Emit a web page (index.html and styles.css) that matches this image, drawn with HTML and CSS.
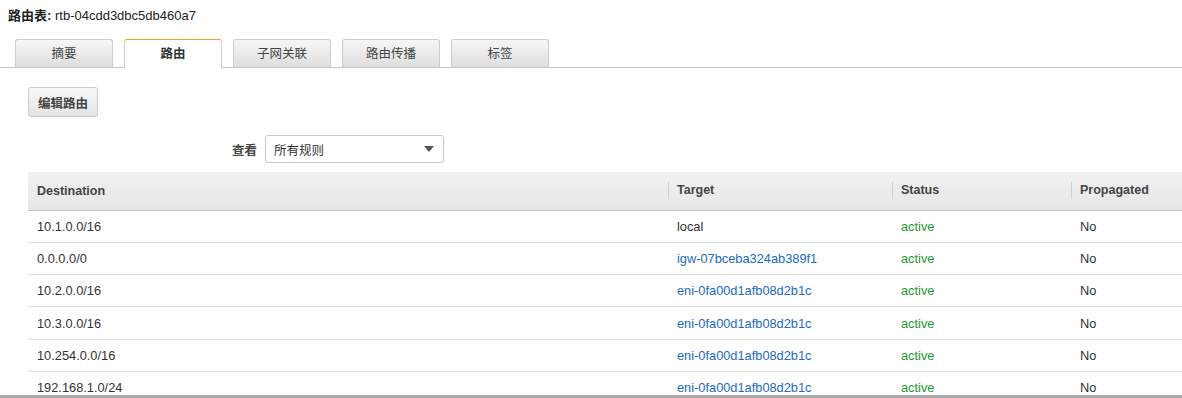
FILE: index.html
```html
<!DOCTYPE html>
<html lang="zh">
<head>
    <meta charset="UTF-8">
    <title>路由表</title>
    <link rel="stylesheet" href="styles.css">
</head>
<body>
    <div class="title"><b>路由表:</b> rtb-04cdd3dbc5db460a7</div>

    <div class="tabs">
        <div class="tab">摘要</div>
        <div class="tab active">路由</div>
        <div class="tab">子网关联</div>
        <div class="tab">路由传播</div>
        <div class="tab">标签</div>
    </div>

    <div class="panel">
        <button class="btn">编辑路由</button>

        <div class="filter">
            <span class="filter-label">查看</span>
            <div class="select">
                <span>所有规则</span>
                <span class="caret"></span>
            </div>
        </div>

        <table class="routes">
            <thead>
                <tr>
                    <th class="c-dest">Destination</th>
                    <th class="c-target"><span>Target</span></th>
                    <th class="c-status"><span>Status</span></th>
                    <th class="c-prop"><span>Propagated</span></th>
                </tr>
            </thead>
            <tbody>
                <tr><td>10.1.0.0/16</td><td>local</td><td class="ok">active</td><td>No</td></tr>
                <tr><td>0.0.0.0/0</td><td><a href="#">igw-07bceba324ab389f1</a></td><td class="ok">active</td><td>No</td></tr>
                <tr><td>10.2.0.0/16</td><td><a href="#">eni-0fa00d1afb08d2b1c</a></td><td class="ok">active</td><td>No</td></tr>
                <tr><td>10.3.0.0/16</td><td><a href="#">eni-0fa00d1afb08d2b1c</a></td><td class="ok">active</td><td>No</td></tr>
                <tr><td>10.254.0.0/16</td><td><a href="#">eni-0fa00d1afb08d2b1c</a></td><td class="ok">active</td><td>No</td></tr>
                <tr><td>192.168.1.0/24</td><td><a href="#">eni-0fa00d1afb08d2b1c</a></td><td class="ok">active</td><td>No</td></tr>
            </tbody>
        </table>
    </div>

    <div class="splitter"></div>
</body>
</html>
```

FILE: styles.css
```css
html, body {
    height: 398px;
    overflow: hidden;
}
body {
    margin: 0;
    font-family: "Liberation Sans", "Noto Sans CJK SC", sans-serif;
    font-size: 12.5px;
    color: #333;
    background: #fff;
    position: relative;
}
.title {
    padding: 5px 8px 0;
    height: 39px;
    box-sizing: border-box;
    font-size: 13px;
    color: #222;
}
.title b {
    font-weight: bold;
}
.tabs {
    display: flex;
    gap: 11px;
    padding-left: 15px;
    border-bottom: 1px solid #c6c6c6;
    height: 28px;
}
.tab {
    width: 98px;
    height: 28px;
    box-sizing: border-box;
    border: 1px solid #cdcdcd;
    border-bottom: none;
    border-radius: 3px 3px 0 0;
    background: linear-gradient(#f6f6f6, #dedede);
    text-align: center;
    line-height: 28px;
    font-size: 12.5px;
    color: #444;
}
.tab.active {
    background: #fff;
    border-top: 1px solid #f0a030;
    height: 29px;
    font-weight: bold;
    color: #333;
}
.panel {
    padding: 19px 0 0 28px;
}
.btn {
    display: block;
    height: 30px;
    padding: 0 9px;
    border: 1px solid #cacaca;
    border-radius: 3px;
    background: linear-gradient(#f8f8f8, #e4e4e4);
    font-family: inherit;
    font-size: 12.5px;
    font-weight: bold;
    color: #444;
}
.filter {
    display: flex;
    align-items: center;
    gap: 8px;
    margin: 18px 0 9px 204px;
}
.filter-label {
    font-weight: bold;
    color: #444;
}
.select {
    display: flex;
    align-items: center;
    justify-content: space-between;
    width: 179px;
    height: 28px;
    box-sizing: border-box;
    padding: 0 9px 0 8px;
    border: 1px solid #c8c8c8;
    border-radius: 3px;
    color: #333;
}
.caret {
    width: 0;
    height: 0;
    border-left: 5px solid transparent;
    border-right: 5px solid transparent;
    border-top: 6px solid #555;
}
.routes {
    width: 1154px;
    border-collapse: collapse;
    table-layout: fixed;
    font-size: 12.8px;
}
.routes th,
.routes td {
    box-sizing: border-box;
}
.routes th {
    height: 38px;
    padding: 0;
    text-align: left;
    font-weight: bold;
    font-size: 12.5px;
    color: #444;
    background: linear-gradient(#f1f1f1, #e6e6e6);
    border-bottom: 1px solid #c4c4c4;
}
.routes th.c-dest {
    width: 640px;
    padding-left: 9px;
}
.c-target { width: 224px; }
.c-status { width: 179px; }
.routes th span {
    display: block;
    border-left: 1px solid #d0d0d0;
    padding-left: 8px;
    line-height: 17px;
}
.routes td {
    height: 32.3px;
    padding: 0 0 0 9px;
    border-bottom: 1px solid #dddddd;
    color: #333;
}
.routes a {
    color: #1a6ac0;
    text-decoration: none;
}
.routes td.ok {
    color: #1c9a30;
}
.splitter {
    position: absolute;
    left: 0;
    right: 0;
    bottom: 0;
    height: 3px;
    background: #a9a9a9;
}
```
